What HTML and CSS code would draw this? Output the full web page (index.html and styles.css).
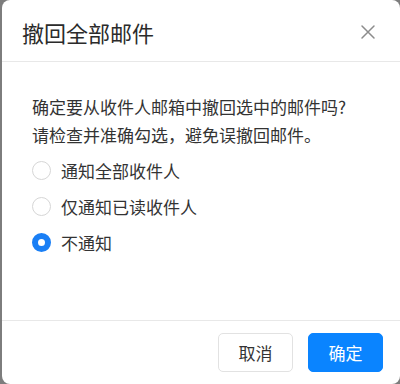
FILE: index.html
```html
<!DOCTYPE html>
<html lang="zh">
<head>
<meta charset="utf-8">
<link rel="stylesheet" href="styles.css">
</head>
<body>
<div class="dialog">
  <div class="header">
    <div class="title">撤回全部邮件</div>
    <button class="close" aria-label="关闭">
      <svg width="16" height="16" viewBox="0 0 16 16"><path d="M2 2L14 14M14 2L2 14" stroke="#8c8c8c" stroke-width="1.5" fill="none" stroke-linecap="round"/></svg>
    </button>
  </div>
  <div class="body">
    <p class="msg">确定要从收件人邮箱中撤回选中的邮件吗?<br>请检查并准确勾选，避免误撤回邮件。</p>
    <div class="options">
      <label class="opt"><span class="radio"></span><span>通知全部收件人</span></label>
      <label class="opt"><span class="radio"></span><span>仅通知已读收件人</span></label>
      <label class="opt"><span class="radio checked"></span><span>不通知</span></label>
    </div>
  </div>
  <div class="footer">
    <button class="btn">取消</button>
    <button class="btn primary">确定</button>
  </div>
</div>
</body>
</html>
```
FILE: styles.css
```css
html, body {
  margin: 0;
  padding: 0;
  width: 400px;
  height: 384px;
  overflow: hidden;
  background: #7d7d7d;
  font-family: "Noto Sans CJK SC", "Noto Sans", sans-serif;
}
.dialog {
  margin-left: 2px;
  width: 398px;
  height: 384px;
  background: #fff;
  border-radius: 8px;
  display: flex;
  flex-direction: column;
  box-sizing: border-box;
}
.header {
  height: 61px;
  flex: none;
  border-bottom: 1px solid #e8e8e8;
  display: flex;
  align-items: center;
  justify-content: space-between;
  padding: 0 20px 0 20px;
}
.title {
  font-size: 22px;
  color: #2b2b2b;
  line-height: 28px;
  margin-top: 2px;
}
.close {
  border: 0;
  background: none;
  padding: 0;
  width: 16px;
  height: 16px;
  display: flex;
  margin-top: 2px;
  margin-right: 4px;
}
.body {
  flex: 1;
  padding: 31px 30px 0 30px;
  color: #333;
  font-size: 17px;
}
.msg {
  margin: 0;
  line-height: 28px;
}
.options {
  margin-top: 3px;
  display: flex;
  flex-direction: column;
}
.opt {
  height: 36px;
  display: flex;
  align-items: center;
  gap: 10px;
}
.radio {
  width: 19px;
  height: 19px;
  box-sizing: border-box;
  border: 1px solid #d6d6d6;
  border-radius: 50%;
  background: #fff;
}
.radio.checked {
  border: 6px solid #1a7ff5;
}
.footer {
  height: 63px;
  flex: none;
  border-top: 1px solid #e8e8e8;
  display: flex;
  align-items: center;
  justify-content: flex-end;
  gap: 15px;
  padding-right: 17px;
}
.btn {
  width: 75px;
  height: 39px;
  border: 1px solid #e2e2e2;
  border-radius: 5px;
  background: #fff;
  color: #333;
  font-family: inherit;
  font-size: 17px;
  padding: 0;
}
.btn.primary {
  background: #0a84ff;
  border-color: #0a84ff;
  color: #fff;
}
```
